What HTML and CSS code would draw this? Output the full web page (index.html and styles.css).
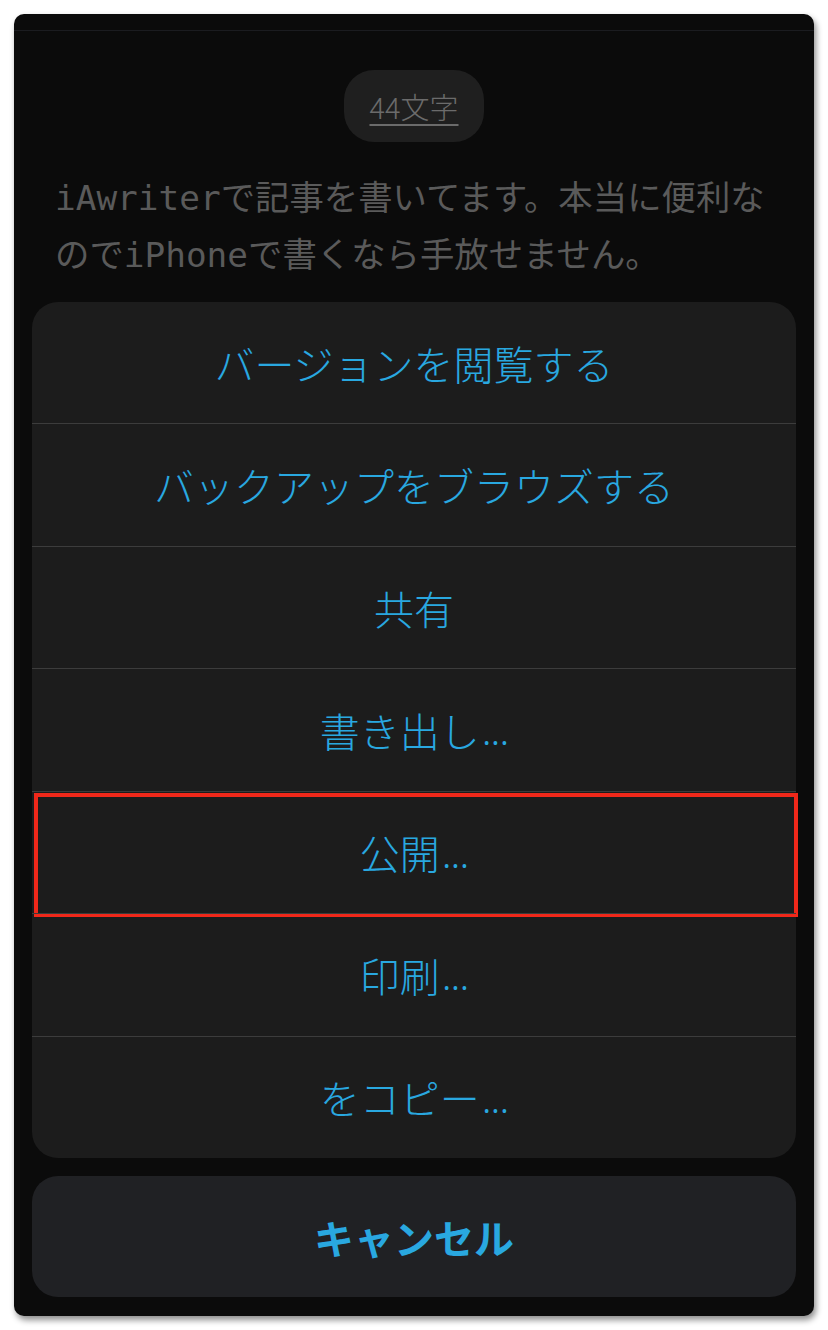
FILE: index.html
```html
<!DOCTYPE html>
<html lang="ja">
<head>
    <meta charset="UTF-8">
    <title>iA Writer メニュー</title>
    <link rel="stylesheet" href="styles.css">
</head>
<body>
    <div class="phone">
        <div class="topbar"></div>
        <div class="editor">
            <div class="counter"><span>44文字</span></div>
            <p class="doc-text">iAwriterで記事を書いてます。本当に便利なのでiPhoneで書くなら手放せません。</p>
        </div>
        <div class="sheet">
            <div class="action">バージョンを閲覧する</div>
            <div class="action">バックアップをブラウズする</div>
            <div class="action">共有</div>
            <div class="action">書き出し<span class="dots">...</span></div>
            <div class="action marked">公開<span class="dots">...</span></div>
            <div class="action">印刷<span class="dots">...</span></div>
            <div class="action">をコピー<span class="dots">...</span></div>
        </div>
        <div class="cancel">キャンセル</div>
    </div>
</body>
</html>
```

FILE: styles.css
```css
body {
    margin: 0;
    padding: 0;
    background-color: #fff;
    font-family: "Noto Sans CJK JP", "Noto Sans", sans-serif;
}
.phone {
    width: 800px;
    height: 1302px;
    margin: 14px;
    background-color: #0b0b0b;
    border-radius: 10px;
    box-shadow: 2px 4px 6px rgba(0, 0, 0, 0.45);
    display: flex;
    flex-direction: column;
    overflow: hidden;
}
.topbar {
    height: 16px;
    border-bottom: 1px solid #1b1c20;
}
.editor {
    padding: 0 41px;
}
.counter {
    display: flex;
    justify-content: center;
    margin-top: 39px;
}
.counter span {
    width: 140px;
    height: 72px;
    line-height: 72px;
    text-align: center;
    background-color: #1f1f1f;
    border-radius: 30px;
    color: #6b6b6b;
    font-size: 29px;
    font-weight: 300;
    text-decoration: underline;
    text-underline-offset: 5px;
}
.doc-text {
    margin: 28px 0 0;
    font-family: "DejaVu Sans Mono", "Noto Sans CJK JP", monospace;
    font-size: 34.4px;
    line-height: 57px;
    color: #5a5a5a;
}
.sheet {
    margin: 18px 18px 0;
    height: 856px;
    background-color: #1c1c1c;
    border-radius: 26px;
    display: flex;
    flex-direction: column;
}
.action {
    flex: 1;
    display: flex;
    align-items: center;
    justify-content: center;
    color: #29a8e0;
    font-size: 40px;
    font-weight: 300;
    border-top: 1px solid #3c3c3c;
    position: relative;
}
.action:first-child {
    border-top: none;
}
.dots {
    font-family: "Noto Sans", sans-serif;
    letter-spacing: -1px;
    margin-left: 2px;
}
.marked::after {
    content: "";
    position: absolute;
    top: 1px;
    left: 2px;
    right: -2px;
    bottom: -4px;
    border: 4px solid #f0281a;
}
.cancel {
    margin: 18px 18px 0;
    height: 121px;
    background-color: #202124;
    border-radius: 26px;
    display: flex;
    align-items: center;
    justify-content: center;
    color: #29a8e0;
    font-size: 40px;
    font-weight: bold;
}
```
